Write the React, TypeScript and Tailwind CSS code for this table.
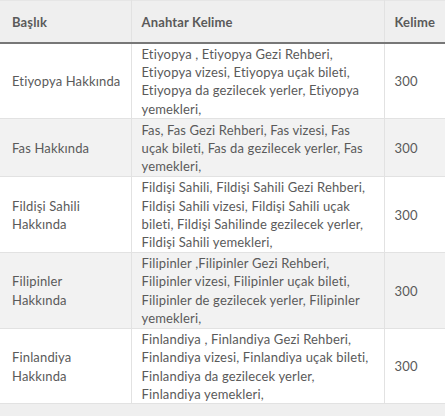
import React from "react";

type Row = { title: string[]; lines: string[]; count: string; h: string; bg: string };

const rows: Row[] = [
  {
    title: ["Etiyopya Hakkında"],
    lines: [
      "Etiyopya , Etiyopya Gezi Rehberi,",
      "Etiyopya vizesi, Etiyopya uçak bileti,",
      "Etiyopya da gezilecek yerler, Etiyopya",
      "yemekleri,",
    ],
    count: "300",
    h: "h-[76px]",
    bg: "bg-white",
  },
  {
    title: ["Fas Hakkında"],
    lines: [
      "Fas, Fas Gezi Rehberi, Fas vizesi, Fas",
      "uçak bileti, Fas da gezilecek yerler, Fas",
      "yemekleri,",
    ],
    count: "300",
    h: "h-[58px]",
    bg: "bg-[#f2f2f2]",
  },
  {
    title: ["Fildişi Sahili", "Hakkında"],
    lines: [
      "Fildişi Sahili, Fildişi Sahili Gezi Rehberi,",
      "Fildişi Sahili vizesi, Fildişi Sahili uçak",
      "bileti, Fildişi Sahilinde gezilecek yerler,",
      "Fildişi Sahili yemekleri,",
    ],
    count: "300",
    h: "h-[75px]",
    bg: "bg-white",
  },
  {
    title: ["Filipinler", "Hakkında"],
    lines: [
      "Filipinler ,Filipinler Gezi Rehberi,",
      "Filipinler vizesi, Filipinler uçak bileti,",
      "Filipinler de gezilecek yerler, Filipinler",
      "yemekleri,",
    ],
    count: "300",
    h: "h-[76px]",
    bg: "bg-[#f2f2f2]",
  },
  {
    title: ["Finlandiya", "Hakkında"],
    lines: [
      "Finlandiya , Finlandiya Gezi Rehberi,",
      "Finlandiya vizesi, Finlandiya uçak bileti,",
      "Finlandiya da gezilecek yerler,",
      "Finlandiya yemekleri,",
    ],
    count: "300",
    h: "h-[74px]",
    bg: "bg-white",
  },
];

export default function App() {
  return (
    <div
      className="w-[445px] h-[416px] overflow-hidden bg-white flex flex-col text-[#5a5a5a] text-[13px] tracking-[0.15px]"
      style={{ fontFamily: "Lato, 'Open Sans', sans-serif" }}
    >
      <div className="flex-1 overflow-hidden">
        <table className="table-fixed border-collapse w-[460px]">
          <colgroup>
            <col className="w-[131px]" />
            <col className="w-[253px]" />
            <col className="w-[76px]" />
          </colgroup>
          <thead>
            <tr className="bg-[#efefef] h-[42px] border-b-2 border-b-[#777777]">
              <th className="text-left font-bold px-[12px] pt-[3px] border-r border-[#e2e2e2] border-t border-t-[#e6e6e6]">Başlık</th>
              <th className="text-left font-bold px-[10px] pt-[3px] border-r border-[#e2e2e2] border-t border-t-[#e6e6e6]">Anahtar Kelime</th>
              <th className="text-left font-bold px-[10px] pt-[3px] border-t border-t-[#e6e6e6]">Kelime</th>
            </tr>
          </thead>
          <tbody>
            {rows.map((r, i) => (
              <tr key={i} className={`${r.bg} border-b border-[#e2e2e2]`}>
                <td className={`${r.h} align-middle px-[12px] pt-[1px] pb-0 leading-[18.4px] border-r border-[#e2e2e2]`}>
                  {r.title.map((t, j) => (
                    <div key={j} className="whitespace-nowrap">{t}</div>
                  ))}
                </td>
                <td className="align-middle px-[10px] pt-[1px] pb-0 leading-[18.4px] border-r border-[#e2e2e2]">
                  {r.lines.map((t, j) => (
                    <div key={j} className="whitespace-nowrap">{t}</div>
                  ))}
                </td>
                <td className="align-middle px-[10px] pt-[1px] pb-0 leading-[18.4px]">{r.count}</td>
              </tr>
            ))}
          </tbody>
        </table>
      </div>
      <div className="h-[12px] bg-[#efefef] shrink-0" />
    </div>
  );
}
